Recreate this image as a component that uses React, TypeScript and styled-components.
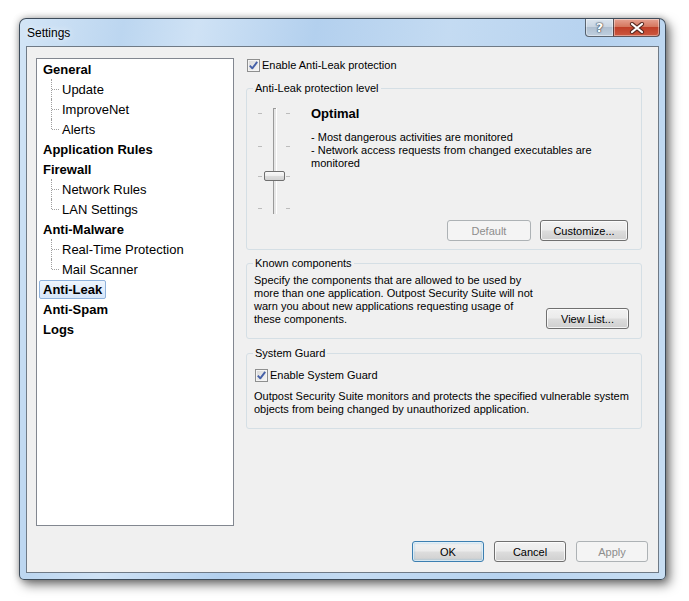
import React from "react";
import styled, { createGlobalStyle, css } from "styled-components";

const GlobalStyle = createGlobalStyle`
  html, body { margin: 0; padding: 0; background: #ffffff; }
  body { font-family: "Liberation Sans", Arial, sans-serif; font-size: 11px; color: #000; }
  * { box-sizing: border-box; }
`;

const Page = styled.div`
  padding: 18px 0 0 19px;
  width: 689px;
  height: 601px;
`;

const Frame = styled.div`
  width: 647px;
  height: 562px;
  border: 1px solid rgba(38, 50, 64, 0.85);
  border-radius: 7px 7px 5px 5px;
  background: linear-gradient(100deg, #d3e5f6 0%, #bcd6f0 14%, #cfe2f5 24%, #b3d0ee 40%, #c4dbf2 58%, #b6d2ef 78%, #c8def3 100%);
  box-shadow: 0 0 7px rgba(0, 0, 0, 0.3), 4px 5px 11px rgba(0, 0, 0, 0.5);
  display: flex;
  flex-direction: column;
  padding: 0 6px 6px 6px;
`;

const TitleBar = styled.div`
  height: 27px;
  display: flex;
  align-items: center;
  justify-content: space-between;
`;

const TitleText = styled.div`
  font-family: "Liberation Sans", Arial, sans-serif;
  font-size: 12px;
  color: #000;
  padding-left: 1px;
  text-shadow: 0 0 6px rgba(255, 255, 255, 0.9);
`;

const CaptionButtons = styled.div`
  align-self: flex-start;
  display: flex;
  margin-right: -1px;
`;

const CaptionButton = styled.div<{ $variant: "help" | "close" }>`
  height: 18px;
  display: flex;
  align-items: center;
  justify-content: center;
  border: 1px solid rgba(50, 60, 72, 0.75);
  border-top: none;
  box-shadow: inset 0 0 0 1px rgba(255, 255, 255, 0.4);
  ${(p) =>
    p.$variant === "help"
      ? css`
          width: 28px;
          border-radius: 0 0 0 4px;
          border-right: none;
          background: linear-gradient(#dbe5ef 0%, #c9d5e2 45%, #afbfd0 50%, #bfcfdf 100%);
        `
      : css`
          width: 47px;
          border-radius: 0 0 4px 0;
          background: linear-gradient(#e6a292 0%, #d5775f 45%, #c03f28 50%, #cc5840 100%);
        `}
`;

const HelpGlyph = styled.span`
  font-family: "DejaVu Sans", sans-serif;
  font-weight: bold;
  font-size: 13px;
  color: #ffffff;
  text-shadow: 0 0 1px #3a4653, 0 0 1px #3a4653, 0 0 2px #3a4653;
  line-height: 1;
`;

const Client = styled.div`
  flex: 1;
  border: 1px solid #6f7a86;
  background: #f0f0f0;
  display: flex;
  flex-direction: column;
`;

const Main = styled.div`
  display: flex;
  gap: 12px;
  padding: 11px 16px 0 9px;
`;

const Tree = styled.div`
  width: 198px;
  height: 468px;
  background: #ffffff;
  border: 1px solid #828790;
  display: flex;
  flex-direction: column;
`;

const TreeRow = styled.div<{ $child?: boolean }>`
  height: 20px;
  display: flex;
  align-items: center;
  padding-left: ${(p) => (p.$child ? "14px" : "2px")};
`;

const Connector = styled.span<{ $last?: boolean }>`
  position: relative;
  width: 7px;
  height: 20px;
  flex: none;
  &::before {
    content: "";
    position: absolute;
    left: 0;
    top: 0;
    height: ${(p) => (p.$last ? "10px" : "20px")};
    border-left: 1px dotted #a0a0a0;
  }
  &::after {
    content: "";
    position: absolute;
    left: 1px;
    top: 10px;
    width: 7px;
    border-top: 1px dotted #a0a0a0;
  }
`;

const TreeLabel = styled.span<{ $bold?: boolean; $selected?: boolean }>`
  font-family: "Liberation Sans", Arial, sans-serif;
  font-size: 13px;
  font-weight: ${(p) => (p.$bold ? "bold" : "normal")};
  line-height: 17px;
  padding: 0 3px;
  border: 1px solid transparent;
  border-radius: 2px;
  color: #000;
  ${(p) =>
    p.$selected &&
    css`
      border-color: #8fb2dc;
      background: linear-gradient(#eef5fd, #d6e6fa);
    `}
`;

const Content = styled.div`
  flex: 1;
  display: flex;
  flex-direction: column;
`;

const CheckRow = styled.label<{ $indent?: number }>`
  height: 14px;
  display: flex;
  align-items: center;
  gap: 2px;
  padding-left: ${(p) => p.$indent ?? 1}px;
  font-size: 11px;
`;

const CheckBox = styled.span`
  width: 13px;
  height: 13px;
  flex: none;
  border: 1px solid #8e8f8f;
  background: linear-gradient(135deg, #d8d8d8, #f6f6f6);
  box-shadow: inset 0 0 0 1px #f4f4f4;
  display: flex;
  align-items: center;
  justify-content: center;
`;

const Group = styled.fieldset<{ $top: number }>`
  margin: ${(p) => p.$top}px 0 0 0;
  padding: 0;
  min-width: 0;
  border: 1px solid #d5dfe5;
  border-radius: 3px;
`;

const Legend = styled.legend`
  margin-left: 6px;
  padding: 0 2px;
  font-size: 11px;
  line-height: 14px;
  color: #000;
`;

const LevelBody = styled.div`
  padding: 11px 13px 8px 9px;
  display: flex;
  flex-direction: column;
`;

const LevelTop = styled.div`
  display: flex;
  align-items: flex-start;
  gap: 19px;
`;

const LevelInfo = styled.div`
  display: flex;
  flex-direction: column;
`;

const LevelTitle = styled.div`
  font-size: 13px;
  font-weight: bold;
  line-height: 16px;
`;

const Text = styled.p<{ $mt?: number; $mb?: number }>`
  margin: ${(p) => p.$mt ?? 0}px 0 ${(p) => p.$mb ?? 0}px 0;
  font-size: 11px;
  line-height: 13px;
  white-space: nowrap;
`;

const ButtonRow = styled.div<{ $mt?: number; $gap?: number }>`
  display: flex;
  justify-content: flex-end;
  gap: ${(p) => p.$gap ?? 9}px;
  margin-top: ${(p) => p.$mt ?? 0}px;
`;

const Button = styled.button<{ $w: number; $default?: boolean }>`
  width: ${(p) => p.$w}px;
  height: 21px;
  padding: 0;
  font-family: "Liberation Sans", Arial, sans-serif;
  font-size: 11px;
  color: #000;
  border: 1px solid #707070;
  border-radius: 3px;
  background: linear-gradient(#f2f2f2 0%, #ebebeb 48%, #dddddd 52%, #cfcfcf 100%);
  box-shadow: inset 0 0 0 1px rgba(255, 255, 255, 0.75);
  &:disabled {
    color: #8d8d8d;
    border-color: #adb2b5;
    background: #f4f4f4;
    box-shadow: none;
  }
  ${(p) =>
    p.$default &&
    css`
      border-color: #3c7fb1;
      box-shadow: inset 0 0 0 1px rgba(255, 255, 255, 0.6), inset 0 0 2px 1px rgba(72, 176, 236, 0.5);
    `}
`;

const KnownBody = styled.div`
  padding: 4px 12px 9px 7px;
  display: flex;
  align-items: flex-end;
  justify-content: space-between;
`;

const GuardBody = styled.div`
  padding: 8px 7px 12px 7px;
  display: flex;
  flex-direction: column;
`;

const Footer = styled.div`
  display: flex;
  justify-content: flex-end;
  gap: 10px;
  padding: 15px 10px 10px 0;
`;

const Check = () => (
  <svg width="11" height="11" viewBox="0 0 11 11">
    <path d="M1.8 5.6 L4.3 8.3 L9.2 1.9" fill="none" stroke="#4560a8" strokeWidth="1.9" strokeLinejoin="round" />
  </svg>
);

const Slider = () => (
  <svg width="36" height="110" viewBox="0 0 36 110">
    {[7, 40, 70, 102].map((y) => (
      <g key={y}>
        <rect x="2" y={y} width="4" height="1" fill="#bcbcbc" />
        <rect x="30" y={y} width="4" height="1" fill="#bcbcbc" />
      </g>
    ))}
    <rect x="17" y="2" width="4" height="106" fill="#e6e6e6" />
    <rect x="17" y="2" width="1" height="106" fill="#9a9a9a" />
    <rect x="17" y="2" width="4" height="1" fill="#9a9a9a" />
    <rect x="20" y="2" width="1" height="106" fill="#ffffff" />
    <defs>
      <linearGradient id="thumb" x1="0" y1="0" x2="0" y2="1">
        <stop offset="0" stopColor="#fbfbfb" />
        <stop offset="0.5" stopColor="#ececec" />
        <stop offset="0.55" stopColor="#dcdcdc" />
        <stop offset="1" stopColor="#d0d0d0" />
      </linearGradient>
    </defs>
    <rect x="8.5" y="65.5" width="20" height="9" rx="1.5" fill="url(#thumb)" stroke="#6f6f6f" />
  </svg>
);

const CloseGlyph = () => (
  <svg width="16" height="12" viewBox="0 0 16 12">
    <path d="M3 2 L13 10 M13 2 L3 10" stroke="#5a2a22" strokeWidth="4.2" strokeLinecap="round" />
    <path d="M3 2 L13 10 M13 2 L3 10" stroke="#ffffff" strokeWidth="2.2" strokeLinecap="round" />
  </svg>
);

type Node = { label: string; children?: string[]; selected?: boolean };

const tree: Node[] = [
  { label: "General", children: ["Update", "ImproveNet", "Alerts"] },
  { label: "Application Rules" },
  { label: "Firewall", children: ["Network Rules", "LAN Settings"] },
  { label: "Anti-Malware", children: ["Real-Time Protection", "Mail Scanner"] },
  { label: "Anti-Leak", selected: true },
  { label: "Anti-Spam" },
  { label: "Logs" },
];

export default function App() {
  return (
    <>
      <GlobalStyle />
      <Page>
        <Frame>
          <TitleBar>
            <TitleText>Settings</TitleText>
            <CaptionButtons>
              <CaptionButton $variant="help">
                <HelpGlyph>?</HelpGlyph>
              </CaptionButton>
              <CaptionButton $variant="close">
                <CloseGlyph />
              </CaptionButton>
            </CaptionButtons>
          </TitleBar>
          <Client>
            <Main>
              <Tree>
                {tree.map((n) => (
                  <React.Fragment key={n.label}>
                    <TreeRow>
                      <TreeLabel $bold $selected={n.selected}>
                        {n.label}
                      </TreeLabel>
                    </TreeRow>
                    {n.children?.map((c, i) => (
                      <TreeRow $child key={c}>
                        <Connector $last={i === n.children!.length - 1} />
                        <TreeLabel>{c}</TreeLabel>
                      </TreeRow>
                    ))}
                  </React.Fragment>
                ))}
              </Tree>
              <Content>
                <CheckRow>
                  <CheckBox>
                    <Check />
                  </CheckBox>
                  Enable Anti-Leak protection
                </CheckRow>
                <Group $top={9}>
                  <Legend>Anti-Leak protection level</Legend>
                  <LevelBody>
                    <LevelTop>
                      <Slider />
                      <LevelInfo>
                        <LevelTitle>Optimal</LevelTitle>
                        <Text $mt={9}>
                          - Most dangerous activities are monitored
                          <br />- Network access requests from changed executables are
                          <br />
                          monitored
                        </Text>
                      </LevelInfo>
                    </LevelTop>
                    <ButtonRow $mt={4}>
                      <Button $w={84} disabled>
                        Default
                      </Button>
                      <Button $w={88}>Customize...</Button>
                    </ButtonRow>
                  </LevelBody>
                </Group>
                <Group $top={6}>
                  <Legend>Known components</Legend>
                  <KnownBody>
                    <Text $mb={3}>
                      Specify the components that are allowed to be used by
                      <br />
                      more than one application. Outpost Security Suite will not
                      <br />
                      warn you about new applications requesting usage of
                      <br />
                      these components.
                    </Text>
                    <Button $w={83}>View List...</Button>
                  </KnownBody>
                </Group>
                <Group $top={7}>
                  <Legend>System Guard</Legend>
                  <GuardBody>
                    <CheckRow $indent={1}>
                      <CheckBox>
                        <Check />
                      </CheckBox>
                      Enable System Guard
                    </CheckRow>
                    <Text $mt={8}>
                      Outpost Security Suite monitors and protects the specified vulnerable system
                      <br />
                      objects from being changed by unauthorized application.
                    </Text>
                  </GuardBody>
                </Group>
              </Content>
            </Main>
            <Footer>
              <Button $w={72} $default>
                OK
              </Button>
              <Button $w={72}>Cancel</Button>
              <Button $w={72} disabled>
                Apply
              </Button>
            </Footer>
          </Client>
        </Frame>
      </Page>
    </>
  );
}
